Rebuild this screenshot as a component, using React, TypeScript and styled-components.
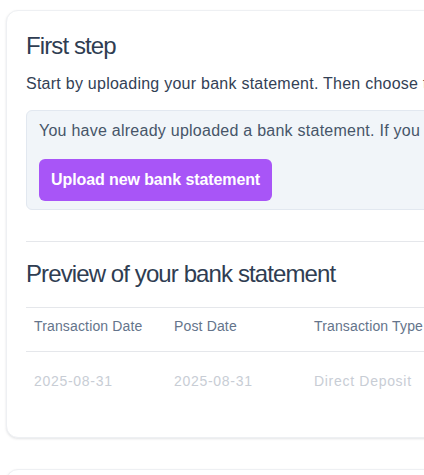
import styled, { createGlobalStyle } from 'styled-components';

const GlobalStyle = createGlobalStyle`
  html, body {
    margin: 0;
    padding: 0;
    background: #ffffff;
    overflow: hidden;
  }
  body {
    font-family: "Liberation Sans", Arial, sans-serif;
    color: #334155;
  }
`;

const rows = [
  { transactionDate: '2025-08-31', postDate: '2025-08-31', type: 'Direct Deposit', description: 'Payroll ACME Corp', amount: '2,450.00' },
];

export default function App() {
  return (
    <>
      <GlobalStyle />
      <Page>
        <Card>
          <Title>First step</Title>
          <Lead>
            Start by uploading your bank statement. Then choose the categories you want to track.
          </Lead>
          <Notice>
            <p>You have already uploaded a bank statement. If you want to replace it, upload a new one.</p>
            <UploadBtn type="button">Upload new bank statement</UploadBtn>
          </Notice>
          <Divider />
          <Title>Preview of your bank statement</Title>
          <Table>
            <thead>
              <tr>
                <th>Transaction Date</th>
                <th>Post Date</th>
                <th>Transaction Type</th>
                <th>Description</th>
                <th>Amount</th>
              </tr>
            </thead>
            <tbody>
              {rows.map((r) => (
                <tr key={r.transactionDate + r.description}>
                  <td>{r.transactionDate}</td>
                  <td>{r.postDate}</td>
                  <td>{r.type}</td>
                  <td>{r.description}</td>
                  <td>{r.amount}</td>
                </tr>
              ))}
            </tbody>
          </Table>
        </Card>
        <Card $short />
      </Page>
    </>
  );
}

const Page = styled.main`
  display: flex;
  flex-direction: column;
  gap: 31px;
  padding: 10px 0 0 6px;
  width: 980px;
`;

const Card = styled.section<{ $short?: boolean }>`
  background: #ffffff;
  border: 1px solid #eef0f3;
  border-radius: 12px;
  box-shadow: 0 1px 3px rgba(15, 23, 42, 0.08), 0 1px 2px rgba(15, 23, 42, 0.04);
  padding: ${(p) => (p.$short ? '0' : '19px 19px 20px')};
  min-height: ${(p) => (p.$short ? '120px' : 'auto')};
`;

const Title = styled.h2`
  margin: 0;
  font-size: 24px;
  line-height: 32px;
  font-weight: 400;
  letter-spacing: -0.9px;
  color: #2f3d52;
`;

const Lead = styled.p`
  margin: 10px 0 14px;
  font-size: 16px;
  line-height: 24px;
  letter-spacing: 0.25px;
  color: #334155;
  white-space: nowrap;
`;

const Notice = styled.div`
  background: #f1f5f9;
  border: 1px solid #e2e8f0;
  border-radius: 6px;
  padding: 8px 12px;
  p {
    margin: 0 0 16px;
    font-size: 16px;
    line-height: 24px;
    letter-spacing: 0.25px;
    color: #475569;
    white-space: nowrap;
  }
`;

const UploadBtn = styled.button`
  display: inline-block;
  height: 42px;
  padding: 0 12px;
  border: 0;
  border-radius: 6px;
  background: #a855f7;
  color: #ffffff;
  font-family: inherit;
  font-size: 16px;
  font-weight: 700;
  letter-spacing: -0.1px;
  cursor: pointer;
`;

const Divider = styled.hr`
  margin: 31px 0 16px;
  border: 0;
  border-top: 1px solid #e5e7eb;
`;

const Table = styled.table`
  margin-top: 17px;
  border-collapse: collapse;
  border-top: 1px solid #e5e7eb;
  table-layout: fixed;
  width: 700px;
  th, td {
    width: 124px;
    padding: 0 8px;
    text-align: left;
    vertical-align: top;
    font-size: 14px;
    line-height: 20px;
    white-space: nowrap;
  }
  th {
    padding-top: 8px;
    padding-bottom: 15px;
    font-weight: 400;
    letter-spacing: 0.15px;
    color: #64748b;
    border-bottom: 1px solid #e5e7eb;
  }
  td {
    padding-top: 19px;
    padding-bottom: 26px;
    letter-spacing: 0.7px;
    color: #c8cdd5;
  }
`;
